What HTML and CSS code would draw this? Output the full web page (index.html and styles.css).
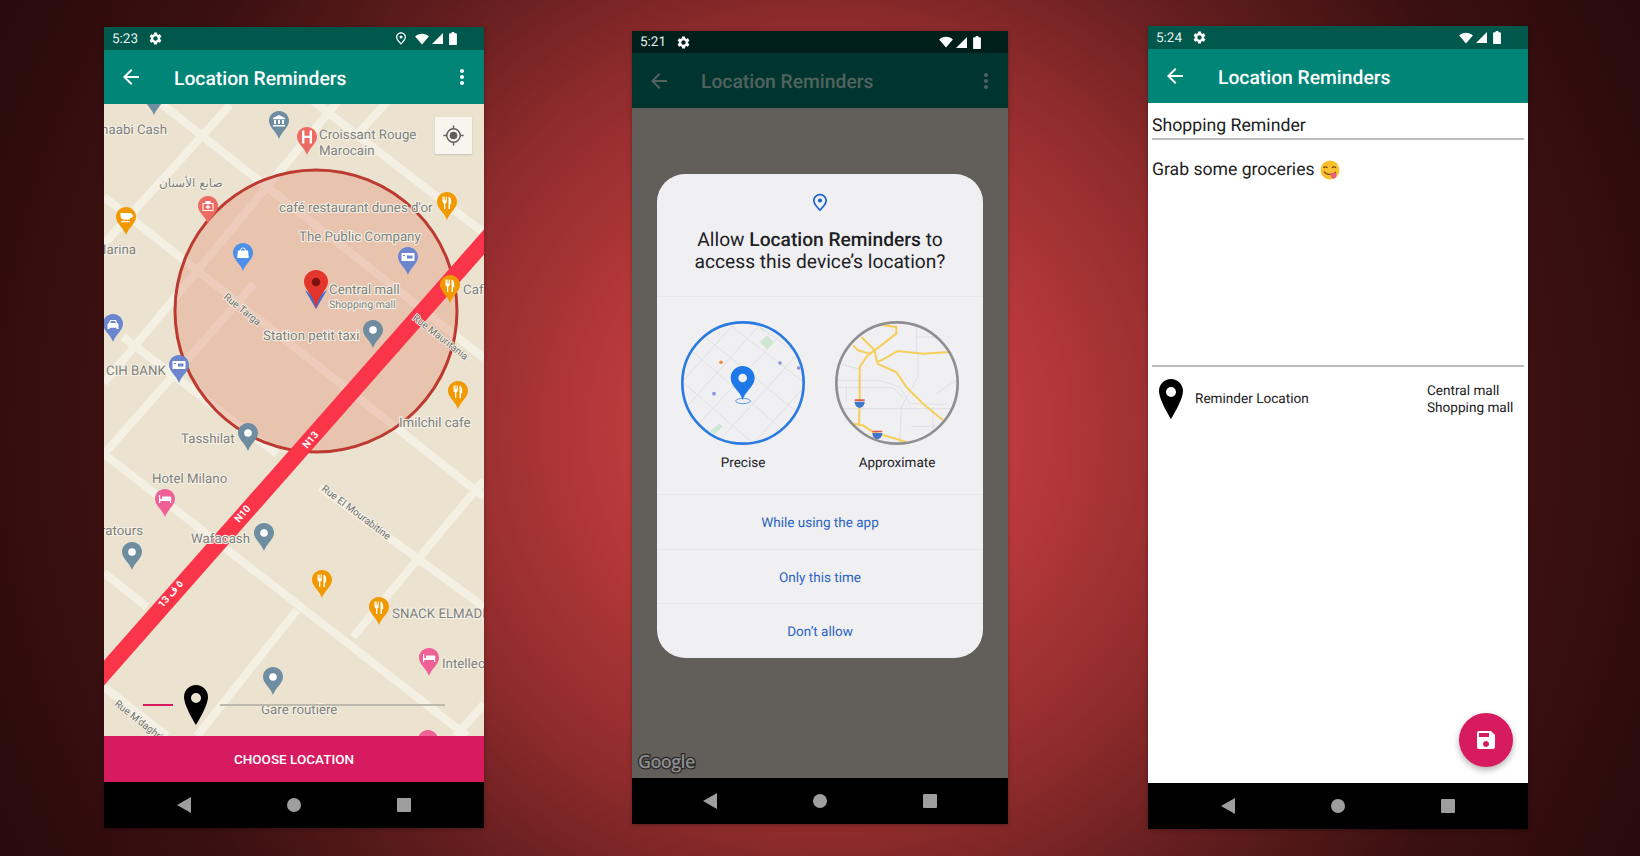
FILE: index.html
```html
<!DOCTYPE html>
<html lang="en">
<head>
  <meta charset="UTF-8">
  <meta name="viewport" content="width=device-width, initial-scale=1.0">
  <title>Location Reminders</title>
  <link rel="stylesheet" href="styles.css">
</head>
<body>

<!-- shared icons -->
<svg class="sprites" aria-hidden="true">
  <symbol id="i-gear" viewBox="0 0 24 24"><path d="M19.14 12.94c.04-.3.06-.61.06-.94 0-.32-.02-.64-.07-.94l2.03-1.58c.18-.14.23-.41.12-.61l-1.92-3.32c-.12-.22-.37-.29-.59-.22l-2.39.96c-.5-.38-1.03-.7-1.62-.94l-.36-2.54c-.04-.24-.24-.41-.48-.41h-3.84c-.24 0-.43.17-.47.41l-.36 2.54c-.59.24-1.13.57-1.62.94l-2.39-.96c-.22-.08-.47 0-.59.22L2.74 8.87c-.12.21-.08.47.12.61l2.03 1.58c-.05.3-.09.63-.09.94s.02.64.07.94l-2.03 1.58c-.18.14-.23.41-.12.61l1.92 3.32c.12.22.37.29.59.22l2.39-.96c.5.38 1.03.7 1.62.94l.36 2.54c.05.24.24.41.48.41h3.84c.24 0 .44-.17.47-.41l.36-2.54c.59-.24 1.13-.56 1.62-.94l2.39.96c.22.08.47 0 .59-.22l1.92-3.32c.12-.22.07-.47-.12-.61l-2.01-1.58zM12 15.6c-1.98 0-3.6-1.62-3.6-3.6s1.62-3.6 3.6-3.6 3.6 1.62 3.6 3.6-1.62 3.6-3.6 3.6z"/></symbol>
  <symbol id="i-wifi" viewBox="0 0 16 14"><path d="M8 13.5L0 4.2C2.2 2.2 5 1 8 1s5.800 1.200 8 3.200z"/></symbol>
  <symbol id="i-signal" viewBox="0 0 14 14"><path d="M14 0v14H0z"/></symbol>
  <symbol id="i-battery" viewBox="0 0 9 15"><path d="M3 0h3v1.500h2c.6 0 1 .4 1 1V14c0 .6-.4 1-1 1H1c-.6 0-1-.4-1-1V2.500c0-.6.4-1 1-1h2z"/></symbol>
  <symbol id="i-locstatus" viewBox="0 0 12 15"><path fill-rule="evenodd" d="M6 0C2.700 0 0 2.600 0 5.800 0 9.800 6 15 6 15s6-5.200 6-9.200C12 2.600 9.300 0 6 0zm0 1.500c2.500 0 4.500 1.900 4.500 4.300 0 2.500-3 5.800-4.500 7.200-1.500-1.400-4.500-4.700-4.500-7.200C1.500 3.400 3.500 1.500 6 1.500zM6 4a1.800 1.800 0 1 0 0 3.600A1.800 1.800 0 0 0 6 4z"/></symbol>
  <symbol id="i-back" viewBox="0 0 24 24"><path d="M20 11H7.830l5.590-5.590L12 4l-8 8 8 8 1.410-1.410L7.830 13H20v-2z"/></symbol>
  <symbol id="i-more" viewBox="0 0 24 24"><path d="M12 8c1.100 0 2-.9 2-2s-.9-2-2-2-2 .9-2 2 .9 2 2 2zm0 2c-1.100 0-2 .9-2 2s.9 2 2 2 2-.9 2-2-.9-2-2-2zm0 6c-1.100 0-2 .9-2 2s.9 2 2 2 2-.9 2-2-.9-2-2-2z"/></symbol>
  <symbol id="i-marker" viewBox="0 0 24 40"><path fill-rule="evenodd" d="M12 0C5.400 0 0 5.400 0 12c0 9 12 28 12 28s12-19 12-28C24 5.400 18.600 0 12 0zm0 8a5 5 0 1 1 0 10 5 5 0 0 1 0-10z"/></symbol>

  <symbol id="pin" viewBox="0 0 20 28"><path d="M10 0C4.500 0 0 4.400 0 9.800c0 6.800 7.600 11 10 18.200 2.400-7.200 10-11.400 10-18.200C20 4.400 15.500 0 10 0z"/></symbol>
  <symbol id="pin-dot" viewBox="0 0 20 28"><use href="#pin"/><circle cx="10" cy="10" r="3.800" fill="#fff"/></symbol>
  <symbol id="pin-food" viewBox="0 0 20 28"><use href="#pin"/><path fill="#fff" d="M5.500 4.500v5c0 1 .7 1.800 1.500 1.900V17h1.300v-5.600c.8-.1 1.500-.9 1.500-1.900v-5h-.9v3.800h-.6V4.500h-.9v3.800h-.6V4.500zM11.500 4.500c1.700.4 2.700 2.200 2.700 4.500v3.200h-1.200V17h-1.500z"/></symbol>
  <symbol id="pin-bank" viewBox="0 0 20 28"><use href="#pin"/><path fill="#fff" d="M10 4l6 3v1.200H4V7zM5 9h2v4H5zM9 9h2v4H9zM13 9h2v4h-2zM4 14h12v1.500H4z"/></symbol>
  <symbol id="pin-hosp" viewBox="0 0 20 28"><use href="#pin"/><path fill="#fff" d="M5 3.500h2.400v5.200h5.200V3.500H15v13h-2.400v-5.500H7.400v5.500H5z"/></symbol>
  <symbol id="pin-plus" viewBox="0 0 20 28"><use href="#pin"/><path fill="#fff" fill-rule="evenodd" d="M4.500 7h3V5h5v2h3v8h-11zm1 1v6h9V8zm3.800 .8h1.400v1.500h1.500v1.400h-1.500v1.500H9.300v-1.500H7.800v-1.400h1.500z"/></symbol>
  <symbol id="pin-cup" viewBox="0 0 20 28"><use href="#pin"/><path fill="#fff" d="M4.500 6h11v1.500c1.600 0 2 1 1.500 2-.4.9-1.300 1.200-2.200 1.200-.7 1.300-2 2.100-3.300 2.100H8.500c-2.300 0-4-2-4-4.300zM5 14h9v1.300H5z"/></symbol>
  <symbol id="pin-bag" viewBox="0 0 20 28"><use href="#pin"/><path fill="#fff" d="M5 7.500h2.200C7.300 5.800 8.500 4.500 10 4.500s2.700 1.300 2.800 3H15l.8 7.500H4.200zm3 0h4c-.1-1.200-.9-2.200-2-2.200s-1.900 1-2 2.200z"/></symbol>
  <symbol id="pin-note" viewBox="0 0 20 28"><use href="#pin"/><path fill="#fff" d="M3.500 6h13v8h-13z"/><path fill="currentColor" d="M5 8h2v1H5zM9 8.500h5.500v3H9z"/></symbol>
  <symbol id="pin-bed" viewBox="0 0 20 28"><use href="#pin"/><path fill="#fff" d="M4 6h1.200v4H7V7.500h8c.7 0 1.200.5 1.200 1.200V14H15v-2H5.200v2H4z"/></symbol>
  <symbol id="pin-car" viewBox="0 0 20 28"><use href="#pin"/><path fill="#fff" d="M6 9l1-3h6l1 3c1 .2 1.500.9 1.500 1.800V15h-2v-1.200h-7V15h-2v-4.200C4.500 9.900 5 9.200 6 9zm1.300 0h5.400l-.6-2H7.900z"/></symbol>
</svg>

<main class="stage">

  <!-- map picker -->
  <section class="phone phone-map">
    <div class="status">
      <span class="clock">5:23</span>
      <svg class="ic-gear"><use href="#i-gear"/></svg>
      <span class="status-right">
        <svg class="ic-loc"><use href="#i-locstatus"/></svg>
        <svg class="ic-wifi"><use href="#i-wifi"/></svg>
        <svg class="ic-signal"><use href="#i-signal"/></svg>
        <svg class="ic-battery"><use href="#i-battery"/></svg>
      </span>
    </div>
    <header class="appbar">
      <svg class="ic-24"><use href="#i-back"/></svg>
      <h1 class="title">Location Reminders</h1>
      <svg class="ic-24 more"><use href="#i-more"/></svg>
    </header>

    <div class="map">
      <svg class="map-canvas" viewBox="0 0 380 632">
        <g class="roads">
          <path d="M40 -14L380 254"/>
          <path d="M0 93L380 393"/>
          <path d="M200 -10L380 129"/>
          <path d="M0 350L363 632"/>
          <path d="M19 233L173 350"/>
          <path d="M216 383L380 503"/>
          <path d="M0 469L43 503"/>
          <path d="M0 583L63 632"/>
          <path d="M126 1L0 140"/>
          <path d="M240 -10L0 279"/>
          <path d="M290 -10L252 32"/>
          <path d="M150 180L0 350"/>
          <path d="M380 376L249 533"/>
          <path d="M193 506L93 632"/>
          <path d="M380 600L352 632"/>
        </g>
        <circle class="zone-fill" cx="212" cy="207" r="141"/>
        <circle class="zone-line" cx="212" cy="207" r="141"/>
        <path class="highway" d="M395 121L-15 586"/>

        <text class="road-num" transform="translate(209 338) rotate(-49)">N13</text>
        <text class="road-num" transform="translate(141 412) rotate(-49)">N10</text>
        <text class="road-num" transform="translate(69 492) rotate(-49)">13 ٥ ف</text>

        <text class="street" transform="translate(119 194) rotate(39)">Rue Targa</text>
        <text class="street" transform="translate(308 215) rotate(38)">Rue Mauritania</text>
        <text class="street" transform="translate(217 386) rotate(37)">Rue El Mourabitine</text>
        <text class="street" transform="translate(10 601) rotate(38)">Rue M'daghri</text>

        <text class="place end" x="63" y="30">Chaabi Cash</text>
        <text class="place" x="215" y="35">Croissant Rouge</text>
        <text class="place" x="215" y="51">Marocain</text>
        <text class="place arabic" x="55" y="83">صانع الأسنان</text>
        <text class="place" x="175" y="108">café restaurant dunes d'or</text>
        <text class="place" x="195" y="137">The Public Company</text>
        <text class="place end" x="32" y="150">Marina</text>
        <text class="place" x="225" y="190">Central mall</text>
        <text class="place small" x="225" y="204">Shopping mall</text>
        <text class="place" x="359" y="190">Cafe</text>
        <text class="place" x="159" y="236">Station petit taxi</text>
        <text class="place" x="2" y="271">CIH BANK</text>
        <text class="place" x="295" y="323">Imilchil cafe</text>
        <text class="place" x="77" y="339">Tasshilat</text>
        <text class="place" x="48" y="379">Hotel Milano</text>
        <text class="place end" x="39" y="431">Maratours</text>
        <text class="place" x="87" y="439">Wafacash</text>
        <text class="place" x="288" y="514">SNACK ELMADI</text>
        <text class="place" x="338" y="564">Intellect</text>
        <text class="place" x="157" y="610">Gare routière</text>

        <g class="pin-slate">
          <use href="#pin-dot" x="40" y="-17" width="20" height="28"/>
          <use href="#pin-bank" x="165" y="7" width="20" height="28"/>
          <use href="#pin-dot" x="259" y="216" width="20" height="28"/>
          <use href="#pin-dot" x="134" y="319" width="20" height="28"/>
          <use href="#pin-dot" x="150" y="419" width="20" height="28"/>
          <use href="#pin-dot" x="18" y="438" width="20" height="28"/>
          <use href="#pin-dot" x="159" y="563" width="20" height="28"/>
        </g>
        <g class="pin-red">
          <use href="#pin-hosp" x="193" y="23" width="20" height="28"/>
          <use href="#pin-plus" x="94" y="92" width="20" height="28"/>
        </g>
        <g class="pin-orange">
          <use href="#pin-food" x="333" y="88" width="20" height="28"/>
          <use href="#pin-cup" x="12" y="103" width="20" height="28"/>
          <use href="#pin-food" x="336" y="171" width="20" height="28"/>
          <use href="#pin-food" x="344" y="277" width="20" height="28"/>
          <use href="#pin-food" x="208" y="466" width="20" height="28"/>
          <use href="#pin-food" x="265" y="493" width="20" height="28"/>
        </g>
        <g class="pin-blue"><use href="#pin-bag" x="129" y="139" width="20" height="28"/></g>
        <g class="pin-violet">
          <use href="#pin-note" x="294" y="143" width="20" height="28"/>
          <use href="#pin-car" x="-1" y="210" width="20" height="28"/>
          <use href="#pin-note" x="65" y="251" width="20" height="28"/>
        </g>
        <g class="pin-pink">
          <use href="#pin-bed" x="51" y="385" width="20" height="28"/>
          <use href="#pin-bed" x="315" y="544" width="20" height="28"/>
          <use href="#pin-bed" x="314" y="626" width="20" height="28"/>
        </g>

        <!-- picked poi -->
        <path class="poi-wing" d="M201 186l11 19 11-19-11 8z"/>
        <path class="poi" d="M212 166c-6.600 0-12 5.200-12 11.600 0 8.400 9.800 13 12 27.400 2.200-14.400 12-19 12-27.400 0-6.400-5.400-11.600-12-11.600z"/>
        <circle class="poi-dot" cx="212" cy="178" r="4.300"/>

        <!-- centre marker and its guide line -->
        <rect class="guide-pink" x="39" y="600" width="30" height="2"/>
        <rect class="guide-grey" x="116" y="600" width="225" height="2"/>
        <use href="#i-marker" x="80" y="581" width="24" height="40"/>
      </svg>

      <button class="locate" type="button">
        <svg viewBox="0 0 24 24"><circle class="loc-ring" cx="12" cy="12" r="7"/><circle class="loc-core" cx="12" cy="12" r="4"/><path class="loc-ticks" d="M12 1.500v3.500M12 19v3.500M1.500 12H5M19 12h3.500"/></svg>
      </button>
    </div>

    <button class="choose" type="button">CHOOSE LOCATION</button>
    <nav class="navbar"><i class="nav-back"></i><i class="nav-home"></i><i class="nav-recent"></i></nav>
  </section>

  <!-- permission dialog -->
  <section class="phone phone-perm">
    <div class="status">
      <span class="clock">5:21</span>
      <svg class="ic-gear"><use href="#i-gear"/></svg>
      <span class="status-right">
        <svg class="ic-wifi"><use href="#i-wifi"/></svg>
        <svg class="ic-signal"><use href="#i-signal"/></svg>
        <svg class="ic-battery"><use href="#i-battery"/></svg>
      </span>
    </div>
    <header class="appbar">
      <svg class="ic-24"><use href="#i-back"/></svg>
      <h1 class="title">Location Reminders</h1>
      <svg class="ic-24 more"><use href="#i-more"/></svg>
    </header>

    <div class="scrim">
      <div class="dialog">
        <div class="dialog-head">
          <svg class="dialog-pin"><use href="#i-locstatus"/></svg>
          <p class="dialog-title">Allow <b>Location Reminders</b> to<br>access this device’s location?</p>
        </div>
        <div class="picker">
          <figure class="choice">
            <svg class="dial" viewBox="110 50 396 396">
              <clipPath id="clip-precise"><circle cx="308" cy="248" r="182"/></clipPath>
              <g clip-path="url(#clip-precise)">
                <path class="thin" d="M130 130L440 400M170 90L500 360M250 60L510 260M110 230L350 440M110 310L260 440M330 60L500 180M450 70L130 420M370 60L130 330M290 60L130 240M500 130L220 440M500 250L330 440M500 330L400 440"/>
                <path class="park" d="M358 125l22-20 22 22-22 20zM210 392l26-22 12 8-24 24zM355 80l20 8-6 8z"/>
                <circle cx="242" cy="186" r="5.500" fill="#e8923a"/>
                <circle cx="419" cy="188" r="5.500" fill="#8d8fe0"/>
                <circle cx="475" cy="203" r="5.500" fill="#8d8fe0"/>
                <circle cx="221" cy="280" r="5.500" fill="#8d8fe0"/>
                <ellipse cx="308" cy="302" rx="22" ry="8" fill="#f0f0f3" stroke="#1f6fd6" stroke-width="2"/>
                <path fill="#1f78e8" d="M307 197c-20 0-36 16-36 36 0 26 28 38 36 66 8-28 36-40 36-66 0-20-16-36-36-36z"/>
                <circle cx="307" cy="233" r="13" fill="#f0f0f3"/>
              </g>
              <circle class="ring-blue" cx="308" cy="248" r="182"/>
            </svg>
            <figcaption>Precise</figcaption>
          </figure>
          <figure class="choice">
            <svg class="dial" viewBox="574 50 396 396">
              <clipPath id="clip-approx"><circle cx="772" cy="248" r="182"/></clipPath>
              <g clip-path="url(#clip-approx)">
                <path class="thin" d="M830 70v90M830 110h130M835 160v70l-50 90-5 110M600 190l70 20M590 240h130l60 20 30 50 110 2M620 255v50M590 262h170l30 30M590 325h370M815 378h100M880 320v110M890 280l60-40"/>
                <path class="yellow" d="M640 135l15 15 35 10 15-10 65-50v-20l-40-5-18-8M665 110l40 40 7 35 13-5 50-28 75 8 80-5M712 190l58 25 30 45 50 50 60 50M660 300V200l20-30 25-20M660 300l-2 75h12l30 20 50 15 50 15"/>
                <path class="yellow" d="M640 372h20"/>
                <path fill="#3f76d0" d="M645 304h30c0 10-6 18-15 18s-15-8-15-18zM698 398h30c0 10-6 18-15 18s-15-8-15-18z"/>
                <path fill="#e05a4e" d="M645 297h30v5h-30zM698 391h30v5h-30z"/>
              </g>
              <circle class="ring-grey" cx="772" cy="248" r="182"/>
            </svg>
            <figcaption>Approximate</figcaption>
          </figure>
        </div>
        <a class="dialog-btn">While using the app</a>
        <a class="dialog-btn">Only this time</a>
        <a class="dialog-btn">Don’t allow</a>
      </div>
      <span class="google">Google</span>
    </div>
    <nav class="navbar"><i class="nav-back"></i><i class="nav-home"></i><i class="nav-recent"></i></nav>
  </section>

  <!-- reminder form -->
  <section class="phone phone-form">
    <div class="status">
      <span class="clock">5:24</span>
      <svg class="ic-gear"><use href="#i-gear"/></svg>
      <span class="status-right">
        <svg class="ic-wifi"><use href="#i-wifi"/></svg>
        <svg class="ic-signal"><use href="#i-signal"/></svg>
        <svg class="ic-battery"><use href="#i-battery"/></svg>
      </span>
    </div>
    <header class="appbar">
      <svg class="ic-24"><use href="#i-back"/></svg>
      <h1 class="title">Location Reminders</h1>
    </header>

    <div class="form">
      <div class="field-title">Shopping Reminder</div>
      <div class="field-desc">Grab some groceries
        <svg class="emoji" viewBox="0 0 20 20">
          <circle cx="10" cy="10" r="9.500" fill="#fbc02d"/>
          <path d="M3.500 8c.8-1.500 3-1.500 4 0M12 8c.8-1.500 3-1.500 4 0" fill="none" stroke="#7a4a12" stroke-width="1.200"/>
          <path d="M4 11.500c2 3.500 8 4 12 .5" fill="none" stroke="#7a4a12" stroke-width="1.200"/>
          <path d="M10.500 14l5-1.500c1.500 2.500 1 5.500-1.500 6-2 .4-3.500-2-3.500-4.500z" fill="#ec5a86"/>
        </svg>
      </div>
      <div class="location-row">
        <svg class="row-pin"><use href="#i-marker"/></svg>
        <span class="row-label">Reminder Location</span>
        <span class="row-value">Central mall<br>Shopping mall</span>
      </div>
      <button class="fab" type="button"><svg viewBox="0 0 24 24"><path d="M17 3H5c-1.110 0-2 .9-2 2v14c0 1.100.89 2 2 2h14c1.100 0 2-.9 2-2V7l-4-4zm-5 16c-1.660 0-3-1.340-3-3s1.340-3 3-3 3 1.340 3 3-1.340 3-3 3zm3-10H5V5h10v4z"/></svg></button>
    </div>
    <nav class="navbar"><i class="nav-back"></i><i class="nav-home"></i><i class="nav-recent"></i></nav>
  </section>

</main>

</body>
</html>
```

FILE: styles.css
```css
* {
  box-sizing: border-box;
}
html, body {
  margin: 0;
  height: 100%;
}
body {
  font-family: Roboto, "Liberation Sans", sans-serif;
  text-rendering: geometricPrecision;
  overflow: hidden;
  background: radial-gradient(circle at 50% 50%, #cb4142 0, #bb3a3c 200px, #8f2b2c 400px, #5e1c1d 570px, #3c1011 720px, #2a0a0b 920px);
}
.sprites {
  position: absolute;
  width: 0;
  height: 0;
}
.stage {
  display: flex;
  align-items: flex-start;
  padding-left: 104px;
}

/* phone shell */
.phone {
  display: flex;
  flex-direction: column;
  width: 380px;
  box-shadow: 0 1px 4px rgba(0, 0, 0, .3);
}
.phone-map {
  margin-top: 27px;
}
.phone-perm {
  width: 376px;
  margin: 31px 140px 0 148px;
}
.phone-form {
  margin-top: 26px;
}

.status {
  display: flex;
  align-items: center;
  height: 23px;
  padding: 0 27px 0 8px;
  background: #00574b;
  color: #e3f0ee;
  fill: #fff;
  font-size: 13.500px;
}
.clock {
  width: 36px;
}
.ic-gear {
  width: 15px;
  height: 15px;
}
.status-right {
  display: flex;
  align-items: center;
  margin-left: auto;
}
.ic-loc {
  width: 10px;
  height: 13px;
  margin-right: 9px;
}
.ic-wifi {
  width: 14px;
  height: 12px;
  margin-right: 3px;
}
.ic-signal {
  width: 11px;
  height: 11px;
  margin-right: 6px;
}
.ic-battery {
  width: 8px;
  height: 13px;
}

.appbar {
  display: flex;
  align-items: center;
  height: 54px;
  padding: 0 10px 0 15px;
  background: #008577;
  color: #fff;
  fill: #fff;
}
.ic-24 {
  flex: none;
  width: 24px;
  height: 24px;
}
.title {
  margin: 3px 0 0 31px;
  font-size: 19.300px;
  font-weight: 500;
}
.more {
  margin-left: auto;
}

.navbar {
  display: flex;
  align-items: center;
  justify-content: center;
  gap: 96px;
  height: 46px;
  background: #000;
}
.nav-back {
  width: 14px;
  height: 16px;
  background: #9e9e9e;
  clip-path: polygon(100% 0, 100% 100%, 0 50%);
}
.nav-home {
  width: 14px;
  height: 14px;
  border-radius: 50%;
  background: #9e9e9e;
}
.nav-recent {
  width: 14px;
  height: 14px;
  border-radius: 1px;
  background: #9e9e9e;
}

/* map screen */
.map {
  position: relative;
  height: 632px;
  background: #ebe3cf;
}
.map-canvas {
  display: block;
  width: 380px;
  height: 632px;
}
.roads path {
  fill: none;
  stroke: #f4f0e4;
  stroke-width: 8;
}
.zone-fill {
  fill: rgba(226, 138, 116, .35);
}
.zone-line {
  fill: none;
  stroke: #bd3a30;
  stroke-width: 3;
}
.highway {
  fill: none;
  stroke: #fa3549;
  stroke-width: 16.500;
}
.road-num {
  fill: #fff;
  font-size: 10px;
  font-weight: 700;
  text-anchor: middle;
}
.street {
  fill: #6f6f6a;
  font-size: 10px;
  paint-order: stroke;
  stroke: #f6f2e8;
  stroke-width: 1.500px;
}
.place {
  fill: #80807a;
  font-size: 13.300px;
  paint-order: stroke;
  stroke: #f6f2e8;
  stroke-width: 2px;
}
.end {
  text-anchor: end;
}
.small {
  font-size: 10.500px;
}
.arabic {
  font-family: "DejaVu Sans", sans-serif;
  font-size: 12px;
}
.pin-slate {
  fill: #6f8da0;
}
.pin-red {
  fill: #ec6b63;
}
.pin-orange {
  fill: #f29900;
}
.pin-blue {
  fill: #4d90ea;
}
.pin-violet {
  fill: #6b86cf;
  color: #6b86cf;
}
.pin-pink {
  fill: #ef6097;
}
.poi {
  fill: #e4352c;
}
.poi-wing {
  fill: #3f6fd0;
}
.poi-dot {
  fill: #7c1210;
}
.guide-pink {
  fill: #d81b60;
}
.guide-grey {
  fill: #bdb9ac;
}
.locate {
  position: absolute;
  top: 13px;
  right: 12px;
  width: 37px;
  height: 37px;
  padding: 7px;
  border: none;
  border-radius: 1px;
  background: #f8f5ee;
  box-shadow: 0 1px 2px rgba(0, 0, 0, .15);
}
.locate svg {
  display: block;
  width: 23px;
  height: 23px;
}
.loc-ring {
  fill: none;
  stroke: #5f5f5f;
  stroke-width: 1.500;
}
.loc-core {
  fill: #5f5f5f;
}
.loc-ticks {
  fill: none;
  stroke: #5f5f5f;
  stroke-width: 1.500;
}
.choose {
  height: 46px;
  padding-top: 1px;
  border: none;
  background: #d81b60;
  color: #fff;
  font-family: inherit;
  font-size: 13.500px;
  font-weight: 500;
}

/* permission screen */
.phone-perm .status {
  height: 22px;
  background: #001f1b;
}
.phone-perm .appbar {
  height: 55px;
  background: #00352f;
  color: #51625f;
  fill: #51625f;
}
.phone-perm .title {
  margin: 1px 0 0 30px;
}
.scrim {
  position: relative;
  height: 670px;
  padding: 66px 25px 0;
  background: #625f5a;
}
.dialog {
  display: flex;
  flex-direction: column;
  height: 484px;
  border-radius: 28px;
  background: #f0f0f3;
}
.dialog-head {
  display: flex;
  flex-direction: column;
  align-items: center;
  height: 123px;
  padding-top: 19px;
  border-bottom: 1px solid #e7e7ea;
}
.dialog-pin {
  width: 14px;
  height: 19px;
  fill: #1a62d0;
}
.dialog-title {
  margin: 17px 0 0;
  color: #202124;
  font-size: 19.200px;
  line-height: 22px;
  text-align: center;
}
.dialog-title b {
  font-weight: 500;
}
.picker {
  display: flex;
  justify-content: space-between;
  height: 197px;
  padding: 20px 20px 0 20px;
}
.choice {
  display: flex;
  flex-direction: column;
  align-items: center;
  gap: 6px;
  margin: 0;
  width: 132px;
  color: #202124;
  font-size: 13.500px;
}
.dial {
  width: 132px;
  height: 132px;
}
.thin {
  fill: none;
  stroke: #e0e0e4;
  stroke-width: 3;
}
.park {
  fill: #cfe6d2;
}
.yellow {
  fill: none;
  stroke: #f5cf57;
  stroke-width: 6;
}
.ring-blue {
  fill: none;
  stroke: #2a7ae2;
  stroke-width: 8;
}
.ring-grey {
  fill: none;
  stroke: #8f8f92;
  stroke-width: 8;
}
.dialog-btn {
  flex: 1;
  display: flex;
  align-items: center;
  justify-content: center;
  padding-top: 2px;
  border-top: 1px solid #e7e7ea;
  color: #2a63c0;
  font-size: 13.500px;
}
.google {
  position: absolute;
  left: 6px;
  bottom: 4px;
  color: #8c8c8c;
  font-family: "Open Sans", sans-serif;
  font-size: 18px;
  font-weight: 600;
  letter-spacing: -.6px;
  paint-order: stroke;
  -webkit-text-stroke: 2.500px #2a2a2a;
}

/* form screen */
.form {
  position: relative;
  display: flex;
  flex-direction: column;
  height: 680px;
  padding: 0 4px;
  background: #fff;
  color: #212121;
}
.field-title {
  height: 37px;
  padding-top: 11px;
  border-bottom: 2px solid #bdbdbd;
  font-size: 17.700px;
  line-height: 24px;
}
.field-desc {
  display: flex;
  align-items: flex-start;
  gap: 5px;
  height: 227px;
  padding-top: 18px;
  border-bottom: 2px solid #bdbdbd;
  font-size: 17.600px;
  line-height: 24px;
}
.emoji {
  width: 20px;
  height: 20px;
  margin-top: 2px;
}
.location-row {
  display: flex;
  align-items: center;
  height: 64px;
  padding-left: 7px;
  font-size: 13.600px;
}
.row-pin {
  flex: none;
  width: 24px;
  height: 40px;
  margin-right: 12px;
}
.row-label {
  width: 232px;
}
.row-value {
  padding-top: 2px;
  line-height: 17px;
}
.fab {
  position: absolute;
  right: 15px;
  bottom: 16px;
  width: 54px;
  height: 54px;
  padding: 15px;
  border: none;
  border-radius: 50%;
  background: #d81b60;
  box-shadow: 0 3px 6px rgba(0, 0, 0, .3);
  fill: #fff;
}
.fab svg {
  display: block;
  width: 24px;
  height: 24px;
}
```
